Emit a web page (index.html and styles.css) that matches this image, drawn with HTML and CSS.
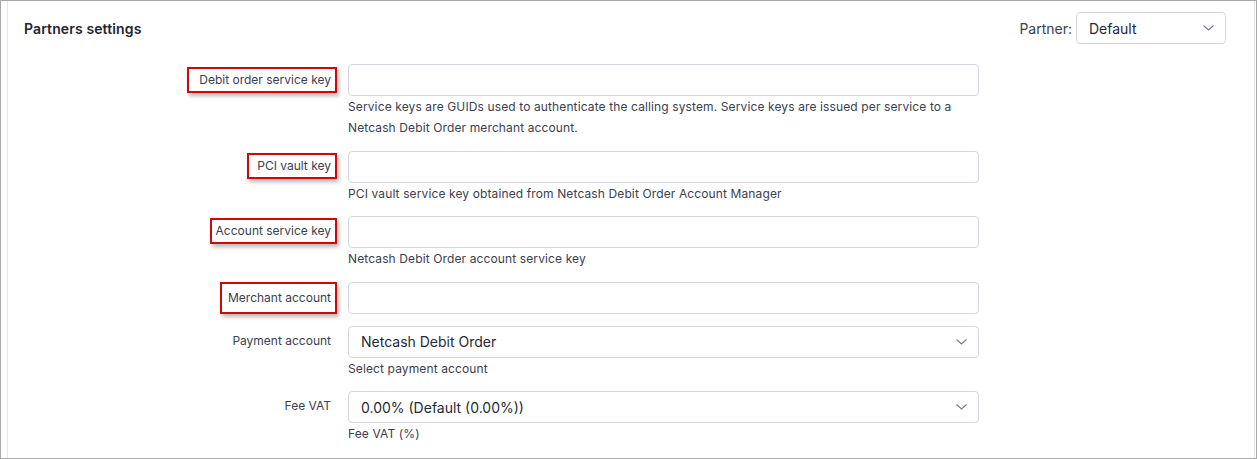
FILE: index.html
```html
<!DOCTYPE html>
<html>
<head>
<meta charset="utf-8">
<link rel="stylesheet" href="styles.css">
</head>
<body>
<div class="frame">
  <div class="panel">
    <div class="header">
      <h2 class="title">Partners settings</h2>
      <div class="partner">
        <span class="partner-label">Partner:</span>
        <div class="select select-sm">
          <span class="select-value">Default</span>
          <svg class="chev" width="11" height="6" viewBox="0 0 11 6"><path d="M0.5 0.5 L5.5 5 L10.5 0.5" fill="none" stroke="#6f7c92" stroke-width="1.1"/></svg>
        </div>
      </div>
    </div>

    <div class="form">
      <div class="label"><span class="mark mark-debit">Debit order service key</span></div>
      <div class="field">
        <div class="input"></div>
        <div class="help">Service keys are GUIDs used to authenticate the calling system. Service keys are issued per service to a Netcash Debit Order merchant account.</div>
      </div>

      <div class="label"><span class="mark mark-pci">PCI vault key</span></div>
      <div class="field">
        <div class="input"></div>
        <div class="help">PCI vault service key obtained from Netcash Debit Order Account Manager</div>
      </div>

      <div class="label"><span class="mark mark-account">Account service key</span></div>
      <div class="field">
        <div class="input"></div>
        <div class="help">Netcash Debit Order account service key</div>
      </div>

      <div class="label"><span class="mark mark-merchant">Merchant account</span></div>
      <div class="field">
        <div class="input"></div>
      </div>

      <div class="label"><span class="plain">Payment account</span></div>
      <div class="field">
        <div class="select">
          <span class="select-value">Netcash Debit Order</span>
          <svg class="chev" width="11" height="6" viewBox="0 0 11 6"><path d="M0.5 0.5 L5.5 5 L10.5 0.5" fill="none" stroke="#6f7c92" stroke-width="1.1"/></svg>
        </div>
        <div class="help">Select payment account</div>
      </div>

      <div class="label"><span class="plain">Fee VAT</span></div>
      <div class="field">
        <div class="select">
          <span class="select-value">0.00% (Default (0.00%))</span>
          <svg class="chev" width="11" height="6" viewBox="0 0 11 6"><path d="M0.5 0.5 L5.5 5 L10.5 0.5" fill="none" stroke="#6f7c92" stroke-width="1.1"/></svg>
        </div>
        <div class="help">Fee VAT (%)</div>
      </div>
    </div>
  </div>
</div>
</body>
</html>
```

FILE: styles.css
```css
* { box-sizing: border-box; }
html, body { margin: 0; padding: 0; background: #fff; }
body {
  font-family: Inter, "Noto Sans", sans-serif;
  color: #3b4050;
  width: 1257px;
  height: 459px;
  overflow: hidden;
}
.frame {
  width: 1257px;
  height: 459px;
  border: 1px solid #a8a8a8;
  overflow: hidden;
}
.panel {
  margin-left: 6px;
  margin-right: 1px;
  height: 100%;
  border-left: 1px solid #e4e6ea;
  border-right: 1px solid #e4e6ea;
  padding: 11px 28px 0 16px;
}
.header {
  display: flex;
  align-items: center;
  justify-content: space-between;
  height: 32px;
}
.title {
  margin: 0;
  font-size: 14px;
  font-weight: 600;
  letter-spacing: 0.12px;
  color: #1f2430;
}
.partner {
  display: flex;
  align-items: center;
  gap: 4px;
}
.partner-label {
  font-size: 14px;
  color: #3b4050;
}
.form {
  margin-top: 19.5px;
  margin-left: -16px;
  display: grid;
  grid-template-columns: 324px 631px;
  column-gap: 16px;
  row-gap: 12px;
  align-items: start;
}
.label {
  text-align: right;
  font-size: 12px;
  line-height: 30px;
  padding-right: 1px;
}
.plain { display: inline-block; }
.mark {
  display: inline-block;
  border: 2px solid #cc0a0a;
  box-shadow: 2px 3px 4px rgba(0, 0, 0, 0.28);
  margin-right: -6px;
  padding-right: 4px;
  line-height: 22px;
}
.mark-debit { padding-left: 10px; margin-top: 3px; }
.mark-pci { padding-left: 8px; margin-top: 1px; }
.mark-account { padding-left: 4px; margin-top: 0px; }
.mark-merchant { padding-left: 6px; line-height: 28px; margin-top: 0px; }
.field { display: flex; flex-direction: column; }
.input, .select {
  height: 32px;
  border: 1px solid #d3d7de;
  border-radius: 4px;
  background: #fff;
}
.select {
  display: flex;
  align-items: center;
  justify-content: space-between;
  padding: 0 11px 0 12px;
  font-size: 14px;
  color: #262a35;
}
.select-sm { width: 150px; }
.chev { display: block; }
.help {
  font-size: 12px;
  line-height: 21.5px;
  letter-spacing: 0.12px;
  color: #3b4050;
}
```
